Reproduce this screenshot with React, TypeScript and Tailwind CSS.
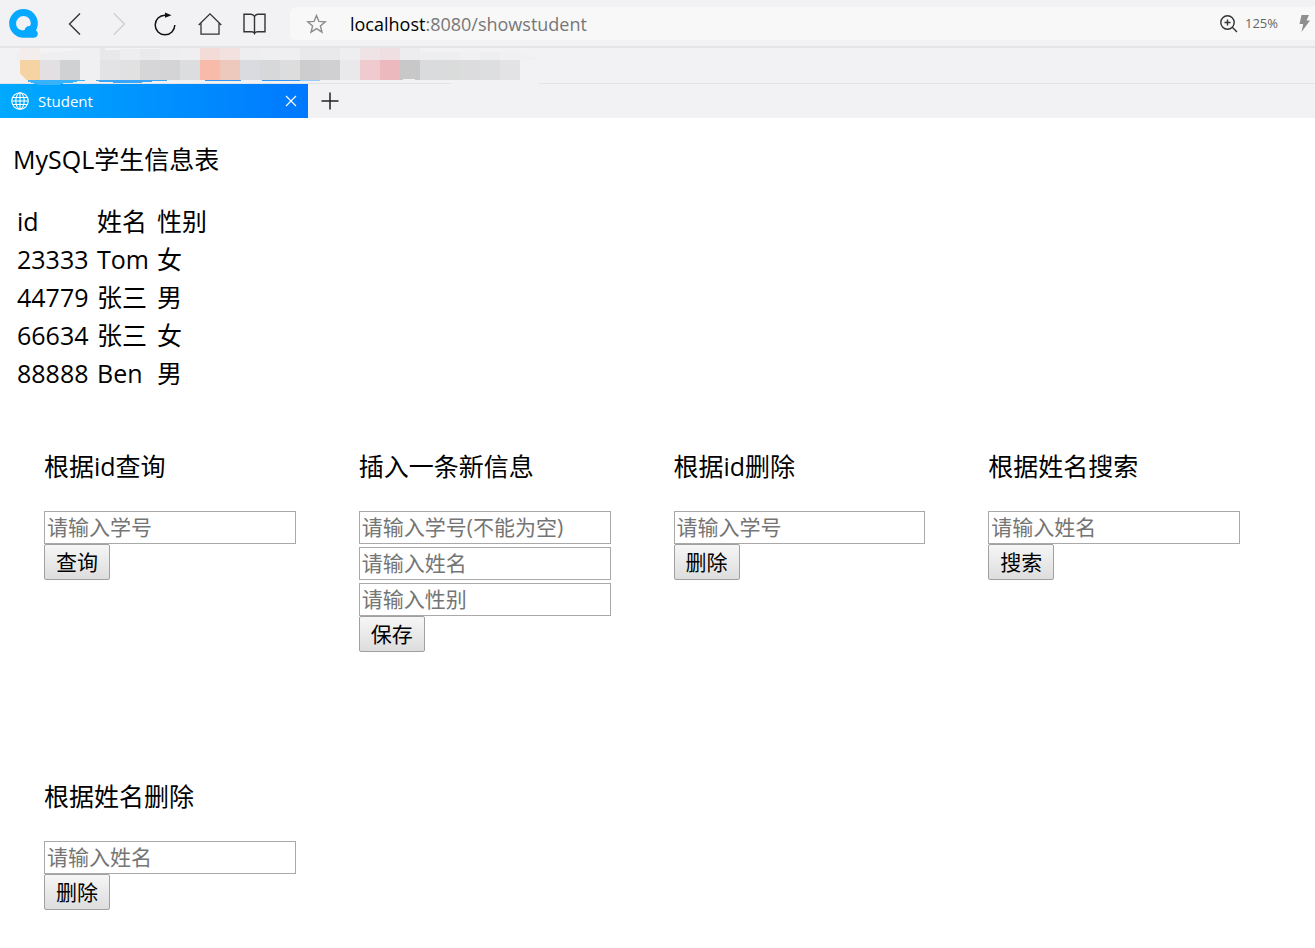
import { FormEvent, ReactNode } from "react";

const students = [
  { id: "23333", name: "Tom", gender: "女" },
  { id: "44779", name: "张三", gender: "男" },
  { id: "66634", name: "张三", gender: "女" },
  { id: "88888", name: "Ben", gender: "男" },
];

const forms = [
  { title: "根据id查询", fields: ["请输入学号"], action: "查询" },
  { title: "插入一条新信息", fields: ["请输入学号(不能为空)", "请输入姓名", "请输入性别"], action: "保存" },
  { title: "根据id删除", fields: ["请输入学号"], action: "删除" },
  { title: "根据姓名搜索", fields: ["请输入姓名"], action: "搜索" },
  { title: "根据姓名删除", fields: ["请输入姓名"], action: "删除" },
];

// x, color of the top half, color of the bottom half
const blocks: [number, string, string][] = [
  [20, "#f3eeec", "#f6d3a2"],
  [40, "#efeff1", "#e2e0e3"],
  [60, "#efeff1", "#cfd1d3"],
  [80, "#f0f0f2", "#f0f0f2"],
  [100, "#e8e8ea", "#e3e3e5"],
  [120, "#eeeef0", "#e1e1e1"],
  [140, "#eaeaec", "#d6d6d8"],
  [160, "#eeeef0", "#d4d4d6"],
  [180, "#efeff1", "#dbdddf"],
  [200, "#f3dcd8", "#f9bba9"],
  [220, "#f3e1df", "#edc8bd"],
  [240, "#eeeef1", "#d9dbe0"],
  [260, "#efeff1", "#d7d8da"],
  [280, "#efeff1", "#dddddd"],
  [300, "#e9e9eb", "#cdcdcf"],
  [320, "#e9e9eb", "#d0d0d2"],
  [340, "#eeeef0", "#e9e9eb"],
  [360, "#f0e3e5", "#efcace"],
  [380, "#f0dfe2", "#ecb9bf"],
  [400, "#ededef", "#c8c8c8"],
  [420, "#eeeef0", "#dadbdd"],
  [440, "#eeeef0", "#d9dcda"],
  [460, "#f0f0f2", "#dcdcde"],
  [480, "#eeeef0", "#dddee0"],
  [500, "#f0f0f2", "#e3e3e5"],
];

function ToolButton({ label, children }: { label: string; children: ReactNode }) {
  return (
    <button type="button" aria-label={label} className="flex h-full w-[45px] items-center justify-center">
      {children}
    </button>
  );
}

function Toolbar() {
  return (
    <div className="flex h-12 items-center border-b-2 border-[#e4e4e6] pt-px">
      <a href="#" aria-label="Home page" className="w-[52px] pl-[9px]">
        <svg width="29" height="29" viewBox="0 0 29 29">
          <path
            fillRule="evenodd"
            fill="#06a9ff"
            d="M14.5 0a14.3 14.3 0 0 1 14.3 14.3c0 2.8-.7 5.2-1.9 7.2 1.3.6 1.9 1.7 1.9 3.3 0 2.2-1.3 3.9-3.8 3.9H14.5A14.3 14.3 0 0 1 14.5 0zM14.5 7a7.4 7.4 0 0 0-7.4 7.4c0 4.2 3.3 7 7.2 6.8l1.3-.2c.5-2.600 2.300-4.300 5.300-4.100.6-.9.9-1.700.9-2.700A7.300 7.300 0 0 0 14.500 7z"
          />
        </svg>
      </a>
      <ToolButton label="Back">
        <svg width="13" height="22" viewBox="0 0 13 22" fill="none" stroke="#333" strokeWidth="1.4">
          <path d="M12 .5 1.500 11 12 21.500" />
        </svg>
      </ToolButton>
      <ToolButton label="Forward">
        <svg width="13" height="22" viewBox="0 0 13 22" fill="none" stroke="#cdcdcf" strokeWidth="1.4">
          <path d="M1 .5 11.500 11 1 21.500" />
        </svg>
      </ToolButton>
      <ToolButton label="Reload">
        <svg width="22" height="24" viewBox="0 0 22 24" fill="none" stroke="#111" strokeWidth="1.5">
          <path d="M12 3.200H11a9.800 9.800 0 1 0 9.800 9.800" />
          <path d="M11 .5 17.500 3.200 11 5.800z" fill="#111" stroke="none" />
        </svg>
      </ToolButton>
      <ToolButton label="Home">
        <svg width="24" height="22" viewBox="0 0 24 22" fill="none" stroke="#333" strokeWidth="1.3">
          <path d="M.7 12 12 .9 23.300 12M3 10v11.200h18V10" />
        </svg>
      </ToolButton>
      <ToolButton label="Favorites">
        <svg width="23" height="22" viewBox="0 0 23 22" fill="none" stroke="#333" strokeWidth="1.4">
          <path d="M11.500 3.500C10.500 1.800 9.500 1.200 8 1.200H1v17.500h7.500c1.600 0 2.400.5 3 1.800.6-1.300 1.400-1.800 3-1.800H22V1.200h-7c-1.500 0-2.500.6-3.500 2.300zv17" />
        </svg>
      </ToolButton>
      <div className="ml-[13px] flex h-[33px] grow items-center rounded-l-md bg-[#f8f8f8] pl-4 pr-[5px]">
        <button type="button" aria-label="Bookmark this page">
          <svg width="21" height="20" viewBox="0 0 21 20" fill="none" stroke="#8c8c8c" strokeWidth="1.4">
            <path d="m10.500 1.500 2.400 5.900 6.400.4-4.900 4.100 1.600 6.300-5.500-3.500L5 18.200l1.600-6.300-4.900-4.100 6.400-.4z" />
          </svg>
        </button>
        <a href="#" className="ml-[23px] text-lg leading-6 text-[#777]">
          <span className="text-black">localhost</span>:8080/showstudent
        </a>
        <button type="button" className="ml-auto flex items-center gap-[7px] text-[13px] text-[#666]">
          <svg width="18" height="18" viewBox="0 0 18 18" fill="none" stroke="#333" strokeWidth="1.4">
            <circle cx="7.500" cy="7.500" r="6.700" />
            <path d="M12.300 12.300 17 17M4.500 7.500h6M7.500 4.500v6" />
          </svg>
          125%
        </button>
        <svg className="ml-[21px]" width="11" height="17" viewBox="0 0 11 17" fill="#8f8f8f">
          <path d="M2.500 0H10L7.500 5.500H11L2.500 17 4.200 9H.5z" />
        </svg>
      </div>
    </div>
  );
}

function BookmarkBar() {
  return (
    <div className="h-9 border-b border-[#e4e4e6]">
      <svg width="540" height="35" viewBox="0 48 540 35" className="relative overflow-visible" shapeRendering="crispEdges">
        <path d="M15 60c0-8 5-12 15-12v12z" fill="#f0f0f2" />
        {blocks.map(([x, top, bottom]) => (
          <g key={x}>
            <rect x={x} y={x >= 420 ? 52 : 48} width="20" height="12" fill={top} />
            <rect x={x} y="60" width="20" height="20" fill={bottom} />
          </g>
        ))}
        <path d="M40 48h40v2l-40 3zM105 48h55v1h-40v1h-15z" fill="#f3f3f5" />
        <path d="M520 55h10l12 5h-22z" fill="#f0f0f2" />
        <path d="M20 74v6h7z" fill="#f2f2f4" />
        <path d="M28 80h57v1h-8v1h-4v1h-10v1h-3v1H38v-1h-4v-1h-3v-1h-3z" fill="#38b2fb" />
        <path d="M96 80h71v1h-15v1h-10v1h-29v-1h-14v-1h-3z" fill="#35a6fb" />
        <path d="M205 80h36v1h-36zM262 80h38v1h-38z" fill="#2f97fa" />
        <path d="M300 80h20v1h-20z" fill="#9accfa" />
        <path d="M403 79h12v1h-12z" fill="#f2f2f4" />
        <path d="M451 83h88v1h-88z" fill="#f2f2f4" />
      </svg>
    </div>
  );
}

function TabStrip() {
  return (
    <div className="flex h-[34px] items-center">
      <div className="flex h-full w-[308px] items-center bg-linear-to-r from-[#00aaff] to-[#0078ff] px-[11px] text-white">
        <svg width="18" height="18" viewBox="0 0 18 18" fill="none" stroke="white" strokeWidth="1.1">
          <circle cx="9" cy="9" r="8.200" />
          <ellipse cx="9" cy="9" rx="4.200" ry="8.200" />
          <path d="M1.500 5.500h15M1.500 12.500h15M.8 9h16.400M9 1v16" />
        </svg>
        <span className="ml-[9px] text-[15px] leading-5">Student</span>
        <button type="button" aria-label="Close tab" className="ml-auto">
          <svg width="12" height="12" viewBox="0 0 12 12" stroke="white" strokeWidth="1.2">
            <path d="m1 1 10 10M11 1 1 11" />
          </svg>
        </button>
      </div>
      <button type="button" aria-label="New tab" className="ml-[13px]">
        <svg width="18" height="18" viewBox="0 0 18 18" stroke="#222" strokeWidth="1.500">
          <path d="M9 .5v17M.5 9h17" />
        </svg>
      </button>
    </div>
  );
}

function StudentForm({ title, fields, action }: { title: string; fields: string[]; action: string }) {
  function submit(event: FormEvent) {
    event.preventDefault();
  }

  return (
    <form onSubmit={submit} className="pl-[31px] pr-8">
      <h2 className="mb-7 font-[370]">{title}</h2>
      <div className="flex flex-col gap-[3px]">
        {fields.map((field) => (
          <input
            key={field}
            type="text"
            aria-label={field}
            placeholder={field}
            className="h-[33px] w-full border border-[#a9a9a9] bg-white px-0.5 text-[21px] outline-none placeholder:text-[#757575]"
          />
        ))}
      </div>
      <button
        type="submit"
        className="block h-9 rounded-[2px] border border-[#a0a0a0] bg-linear-to-b from-[#f6f6f6] to-[#dddddd] px-[11px] text-[21px] leading-[34px]"
      >
        {action}
      </button>
    </form>
  );
}

export default function App() {
  return (
    <div className="min-h-screen bg-white font-['Open_Sans','Noto_Sans_CJK_SC',sans-serif] text-black">
      <header className="bg-[#f2f2f4]">
        <Toolbar />
        <BookmarkBar />
        <TabStrip />
      </header>

      <main className="pt-[25px] text-[25px] font-[370] leading-[33px]">
        <h1 className="px-[13px] font-[370]">MySQL学生信息表</h1>
        <table className="ml-[17px] mt-[26px] border-collapse text-left leading-[38px]">
          <thead>
            <tr>
              <th className="w-20 p-0 font-[370]">id</th>
              <th className="w-[60px] p-0 font-[370]">姓名</th>
              <th className="p-0 font-[370]">性别</th>
            </tr>
          </thead>
          <tbody>
            {students.map((student) => (
              <tr key={student.id}>
                <td className="p-0">{student.id}</td>
                <td className="p-0">{student.name}</td>
                <td className="p-0">{student.gender}</td>
              </tr>
            ))}
          </tbody>
        </table>

        <div className="mt-[58px] grid grid-cols-4 gap-y-[128px] pl-[13px] pr-[43px]">
          {forms.map((form) => (
            <StudentForm key={form.title} {...form} />
          ))}
        </div>
      </main>
    </div>
  );
}
